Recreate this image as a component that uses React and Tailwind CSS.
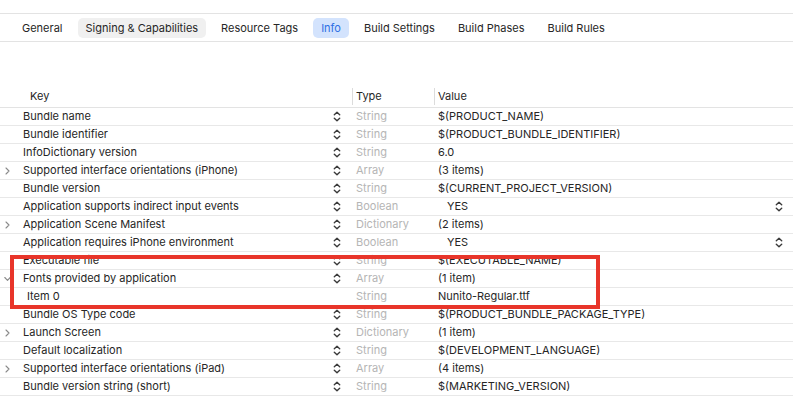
const tabs = [
  { label: 'General' },
  { label: 'Signing & Capabilities', pill: 'bg-[#f0f0f0] text-[#262626]' },
  { label: 'Resource Tags' },
  { label: 'Info', pill: 'bg-[#d3e3fd] text-[#2f6fe4]' },
  { label: 'Build Settings' },
  { label: 'Build Phases' },
  { label: 'Build Rules' },
];

const rows = [
  { key: 'Bundle name', type: 'String', value: '$(PRODUCT_NAME)' },
  { key: 'Bundle identifier', type: 'String', value: '$(PRODUCT_BUNDLE_IDENTIFIER)' },
  { key: 'InfoDictionary version', type: 'String', value: '6.0' },
  { key: 'Supported interface orientations (iPhone)', type: 'Array', value: '(3 items)', group: 'closed' },
  { key: 'Bundle version', type: 'String', value: '$(CURRENT_PROJECT_VERSION)' },
  { key: 'Application supports indirect input events', type: 'Boolean', value: 'YES', bool: true },
  { key: 'Application Scene Manifest', type: 'Dictionary', value: '(2 items)', group: 'closed' },
  { key: 'Application requires iPhone environment', type: 'Boolean', value: 'YES', bool: true },
  { key: 'Executable file', type: 'String', value: '$(EXECUTABLE_NAME)' },
  { key: 'Fonts provided by application', type: 'Array', value: '(1 item)', group: 'open' },
  { key: 'Item 0', type: 'String', value: 'Nunito-Regular.ttf', child: true },
  { key: 'Bundle OS Type code', type: 'String', value: '$(PRODUCT_BUNDLE_PACKAGE_TYPE)' },
  { key: 'Launch Screen', type: 'Dictionary', value: '(1 item)', group: 'closed' },
  { key: 'Default localization', type: 'String', value: '$(DEVELOPMENT_LANGUAGE)' },
  { key: 'Supported interface orientations (iPad)', type: 'Array', value: '(4 items)', group: 'closed' },
  { key: 'Bundle version string (short)', type: 'String', value: '$(MARKETING_VERSION)' },
];

function Stepper({ className = '' }) {
  return (
    <svg width="8" height="11" viewBox="0 0 8 11" className={className} fill="none" stroke="#3a3a3a" strokeWidth="1.4" strokeLinecap="round" strokeLinejoin="round">
      <path d="M1.3 3.8 L4 1.3 L6.7 3.8" />
      <path d="M1.3 7.2 L4 9.7 L6.7 7.2" />
    </svg>
  );
}

function Disclosure({ open }) {
  return (
    <svg width="7" height="8" viewBox="0 0 7 8" fill="none" stroke="#8a8a8a" strokeWidth="1.1" strokeLinecap="round" strokeLinejoin="round">
      {open ? <path d="M0.8 2.5 L3.5 5.3 L6.2 2.5" /> : <path d="M2 1 L5 4 L2 7" />}
    </svg>
  );
}

export default function App() {
  return (
    <div className="w-[793px] h-[414px] bg-white overflow-hidden relative text-[11px] text-[#262626]" style={{ fontFamily: 'Inter, "Noto Sans", sans-serif' }}>
      <div className="h-[13px]" />
      <div className="h-[29px] border-y border-[#e3e3e3] flex items-center pl-[14px]">
        {tabs.map((t) => (
          <div key={t.label} className={`h-[20px] px-[8px] mr-[7px] mt-[1px] flex items-center rounded-[5px] ${t.pill || ''}`}>
            {t.label}
          </div>
        ))}
      </div>

      <div className="h-[44px]" />

      <div className="flex h-[22px] items-center border-b border-[#e3e3e3]">
        <div className="w-[352px] pl-[30px] h-full flex items-center">Key</div>
        <div className="w-[82px] h-[17px] border-l border-[#dcdcdc] pl-[3px] flex items-center">Type</div>
        <div className="flex-1 h-[17px] border-l border-[#dcdcdc] pl-[3px] flex items-center">Value</div>
      </div>

      {rows.map((r) => (
        <div key={r.key} className="flex h-[18px] items-center border-b border-[#e8e8e8]">
          <div className="w-[352px] flex items-center h-full">
            <div className="w-[23px] pl-[4px] flex items-center">
              {r.group && <Disclosure open={r.group === 'open'} />}
            </div>
            <div className={`flex-1 ${r.child ? 'pl-[4px]' : ''}`}>{r.key}</div>
            <div className="w-[19px] flex items-center">
              {!r.child && <Stepper />}
            </div>
          </div>
          <div className="w-[82px] pl-[4px] text-[#b5b5b5]">{r.type}</div>
          <div className="flex-1 flex items-center pr-[10px]">
            <div className={`flex-1 ${r.bool ? 'pl-[13px]' : 'pl-[4px]'}`}>{r.value}</div>
            {r.bool && <Stepper />}
          </div>
        </div>
      ))}

      <div className="absolute left-[10px] top-[255px] w-[590px] h-[54px] border-[4px] border-[#e8352a]" />
    </div>
  );
}
